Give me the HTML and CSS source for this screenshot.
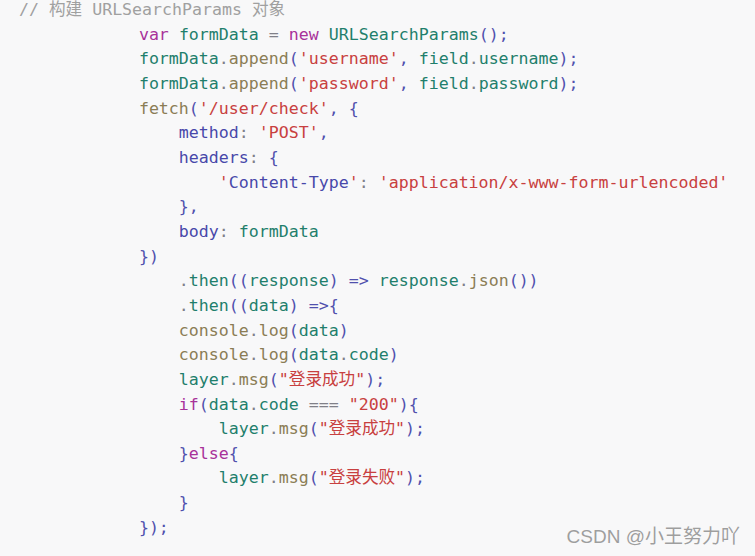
FILE: index.html
```html
<!DOCTYPE html>
<html lang="zh">
<head>
<meta charset="utf-8">
<link rel="stylesheet" href="styles.css">
</head>
<body>
<div class="code-wrap">
<pre class="code"><span class="c">// 构建 URLSearchParams 对象</span>
            <span class="k">var</span> <span class="v">formData</span> <span class="o">=</span> <span class="k">new</span> <span class="t">URLSearchParams</span><span class="p">();</span>
            <span class="v">formData</span><span class="o">.</span><span class="f">append</span><span class="p">(</span><span class="s">'username'</span><span class="p">,</span> <span class="v">field</span><span class="o">.</span><span class="v">username</span><span class="p">);</span>
            <span class="v">formData</span><span class="o">.</span><span class="f">append</span><span class="p">(</span><span class="s">'password'</span><span class="p">,</span> <span class="v">field</span><span class="o">.</span><span class="v">password</span><span class="p">);</span>
            <span class="f">fetch</span><span class="p">(</span><span class="s">'/user/check'</span><span class="p">, {</span>
                <span class="a">method</span><span class="o">:</span> <span class="s">'POST'</span><span class="p">,</span>
                <span class="a">headers</span><span class="o">:</span> <span class="p">{</span>
                    <span class="s">'</span><span class="a">Content-Type</span><span class="s">'</span><span class="o">:</span> <span class="s">'application/x-www-form-urlencoded'</span>
                <span class="p">},</span>
                <span class="a">body</span><span class="o">:</span> <span class="v">formData</span>
            <span class="p">})</span>
                <span class="o">.</span><span class="f2">then</span><span class="p">((</span><span class="v">response</span><span class="p">)</span> <span class="p">=&gt;</span> <span class="v">response</span><span class="o">.</span><span class="f">json</span><span class="p">())</span>
                <span class="o">.</span><span class="f2">then</span><span class="p">((</span><span class="v">data</span><span class="p">)</span> <span class="p">=&gt;{</span>
                <span class="f">console</span><span class="o">.</span><span class="f">log</span><span class="p">(</span><span class="v">data</span><span class="p">)</span>
                <span class="f">console</span><span class="o">.</span><span class="f">log</span><span class="p">(</span><span class="v">data</span><span class="o">.</span><span class="v">code</span><span class="p">)</span>
                <span class="v">layer</span><span class="o">.</span><span class="f">msg</span><span class="p">(</span><span class="s">"登录成功"</span><span class="p">);</span>
                <span class="k">if</span><span class="p">(</span><span class="v">data</span><span class="o">.</span><span class="v">code</span> <span class="o">===</span> <span class="s">"200"</span><span class="p">){</span>
                    <span class="v">layer</span><span class="o">.</span><span class="f">msg</span><span class="p">(</span><span class="s">"登录成功"</span><span class="p">);</span>
                <span class="p">}</span><span class="k">else</span><span class="p">{</span>
                    <span class="v">layer</span><span class="o">.</span><span class="f">msg</span><span class="p">(</span><span class="s">"登录失败"</span><span class="p">);</span>
                <span class="p">}</span>
            <span class="p">});</span></pre>
<div class="watermark">CSDN @小王努力吖</div>
</div>
</body>
</html>
```
FILE: styles.css
```css
html, body {
  margin: 0;
  padding: 0;
  background: #f8f8f9;
}
.code-wrap {
  position: relative;
  width: 755px;
  height: 556px;
  overflow: hidden;
  background: #f8f8f9;
}
.code {
  margin: -2px 0 0 0;
  padding: 0 0 0 19px;
  font-family: "DejaVu Sans Mono", "Noto Sans CJK SC", monospace;
  font-size: 16.6px;
  line-height: 24.66px;
  color: #383a42;
  white-space: pre;
}
.c { color: #a0a0a0; }
.k { color: #a8329a; }
.v { color: #1f7f6c; }
.t { color: #1f7f6c; }
.o { color: #808088; }
.p { color: #5050ad; }
.f { color: #8b7d55; }
.f2 { color: #1f7f6c; }
.s { color: #c84040; }
.a { color: #4848aa; }
.watermark {
  position: absolute;
  right: 15px;
  bottom: 8px;
  font-family: "Liberation Sans", "Noto Sans CJK SC", sans-serif;
  font-size: 19px;
  color: #9e9e9e;
  text-shadow: 0 0 1px #ffffff;
}
```
